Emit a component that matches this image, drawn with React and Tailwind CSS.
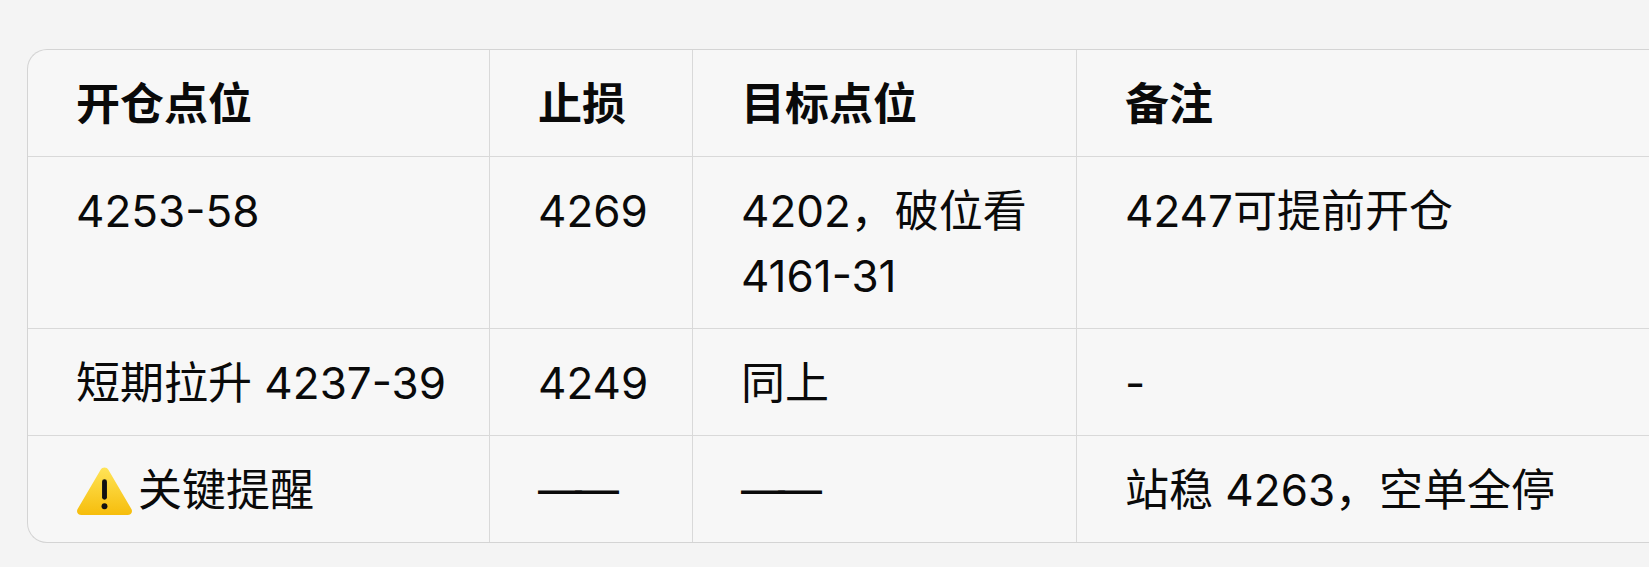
const rows = [
  ['4253-58', '4269', '4202，破位看 4161-31', '4247可提前开仓'],
  ['短期拉升 4237-39', '4249', '同上', '-'],
]

function Warn() {
  return (
    <svg width="57" height="49" viewBox="0 0 56 48" className="mr-[5px] shrink-0">
      <defs>
        <linearGradient id="wg" x1="0" y1="0" x2="0" y2="1">
          <stop offset="0" stopColor="#ffe457" />
          <stop offset="1" stopColor="#f6bd0c" />
        </linearGradient>
      </defs>
      <path d="M24.2 3.6c1.7-2.9 5.9-2.9 7.6 0l22.6 38.6c1.7 2.9-.4 5.8-3.8 5.8H5.4c-3.4 0-5.5-2.9-3.8-5.8z" fill="url(#wg)" />
      <rect x="25.6" y="13" width="4.8" height="20" rx="2.4" fill="#111" />
      <circle cx="28" cy="39.5" r="2.9" fill="#111" />
    </svg>
  )
}

const cols = 'grid grid-cols-[462px_203px_384px_1fr]'
const cell = 'px-[48px] pt-[22px] pb-[19px] border-r border-[#d9d9d9]'
const last = 'px-[48px] pt-[22px] pb-[19px]'

export default function App() {
  return (
    <div
      className="min-h-screen overflow-hidden bg-[#f4f4f4] pt-[49px] pl-[27px] text-[44px] leading-[65px] text-[#0a0a0a]"
      style={{ fontFamily: 'Inter, "Noto Sans CJK SC", sans-serif' }}
    >
      <div className="w-[1720px] rounded-l-[20px] border border-r-0 border-[#d4d4d4] bg-[#f7f7f7]">
        <div className={`${cols} border-b border-[#d9d9d9] font-semibold`}>
          <div className={cell}>开仓点位</div>
          <div className={cell}>止损</div>
          <div className={cell}>目标点位</div>
          <div className={last}>备注</div>
        </div>
        {rows.map((r, i) => (
          <div key={i} className={`${cols} border-b border-[#d9d9d9]`}>
            <div className={`${cell} whitespace-nowrap`}>{r[0]}</div>
            <div className={cell}>{r[1]}</div>
            <div className={cell}>{r[2]}</div>
            <div className={last}>{r[3]}</div>
          </div>
        ))}
        <div className={cols}>
          <div className={`${cell} flex items-center`}>
            <Warn />
            <span>关键提醒</span>
          </div>
          <div className={`${cell} tracking-[-7px]`}>——</div>
          <div className={`${cell} tracking-[-7px]`}>——</div>
          <div className={last}>站稳 4263，空单全停</div>
        </div>
      </div>
    </div>
  )
}
